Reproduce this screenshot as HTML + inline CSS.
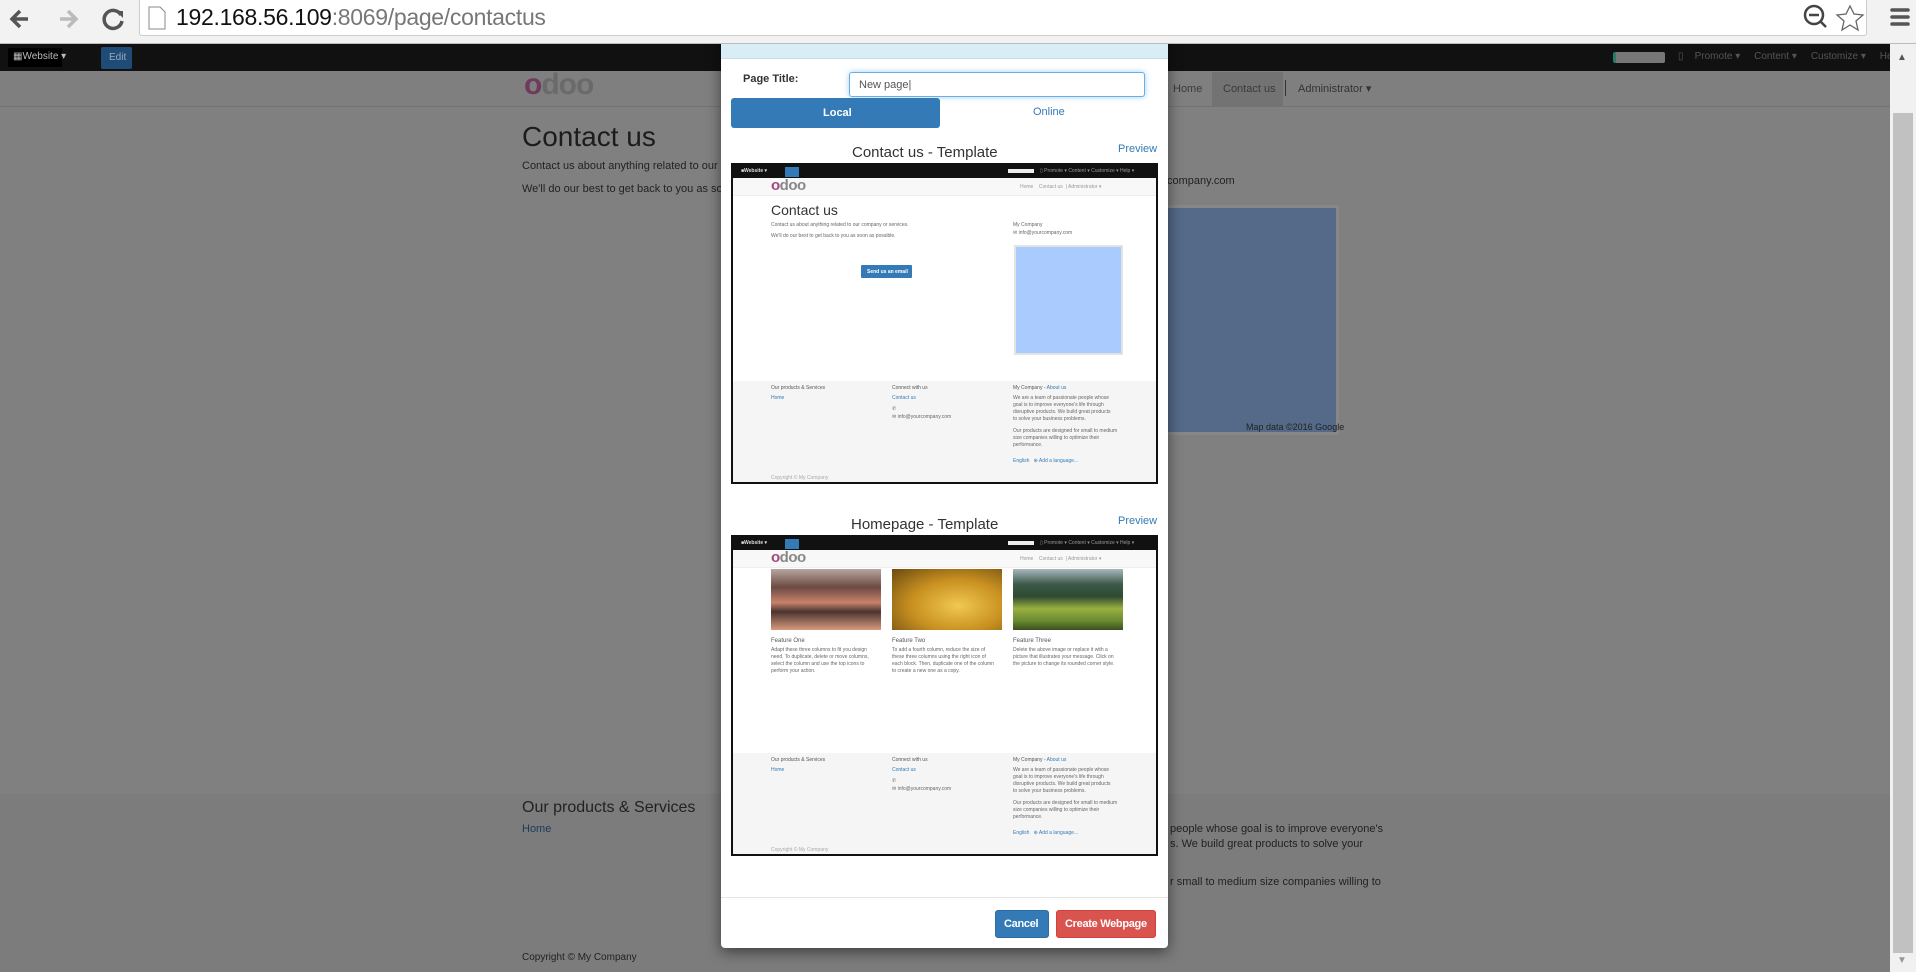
<!DOCTYPE html>
<html><head><meta charset="utf-8"><style>
*{margin:0;padding:0;box-sizing:border-box}
body{width:1916px;height:972px;overflow:hidden;position:relative;background:#808080;font-family:"Liberation Sans",Arial,sans-serif}
.a{position:absolute}
.t{position:absolute;white-space:nowrap}
.th{position:absolute;left:731px;width:427px;height:321px;border:2px solid #111;background:#fff;overflow:hidden}
.th .t{font-size:5px;color:#666}
</style></head><body>
<!-- black bar -->
<div class="a" style="left:0;top:44px;width:1916px;height:27px;background:#111"></div>
<div class="a" style="left:8px;top:48px;width:54px;height:19px;background:#000"></div>
<div class="t" style="left:13px;top:51px;font-size:10px;color:#bbb">&#9638;Website ▾</div>
<div class="a" style="left:101px;top:47px;width:31px;height:22px;background:#1f4c76;border-radius:2px"></div>
<div class="t" style="left:109px;top:52px;font-size:10px;color:#9ab">Edit</div>
<div class="a" style="left:1613px;top:52px;width:52px;height:11px;background:#777;border-radius:2px;border-left:3px solid #2a7a6a"></div>
<div class="t" style="left:1678px;top:51px;font-size:10px;color:#555">▯&nbsp;&nbsp;&nbsp; Promote ▾&nbsp;&nbsp;&nbsp;&nbsp; Content ▾&nbsp;&nbsp;&nbsp;&nbsp; Customize ▾&nbsp;&nbsp;&nbsp;&nbsp; He</div>
<!-- page header -->
<div class="a" style="left:0;top:71px;width:1890px;height:36px;background:#7f7f7f;border-bottom:1px solid #737373"></div>
<div class="t" style="left:524px;top:68px;font-size:30px;color:#6a6a6a;letter-spacing:-1px;font-weight:bold;-webkit-text-stroke:0"><span style="color:#6e3a5e">o</span>doo</div>
<div class="a" style="left:1212px;top:72px;width:71px;height:35px;background:#737373"></div>
<div class="t" style="left:1173px;top:83px;font-size:11px;color:#3a3a3a">Home</div>
<div class="t" style="left:1223px;top:83px;font-size:11px;color:#3a3a3a">Contact us</div>
<div class="a" style="left:1285px;top:80px;width:1px;height:16px;background:#333"></div>
<div class="t" style="left:1298px;top:82px;font-size:11px;color:#333">Administrator ▾</div>
<!-- page body -->
<div class="t" style="left:522px;top:121px;font-size:28px;color:#1c1c1c">Contact us</div>
<div class="t" style="left:522px;top:160px;font-size:11px;color:#222">Contact us about anything related to our co</div>
<div class="t" style="left:522px;top:183px;font-size:11px;color:#222">We'll do our best to get back to you as soo</div>
<div class="t" style="left:1167px;top:175px;font-size:11px;color:#222">company.com</div>
<div class="a" style="left:1167px;top:205px;width:172px;height:230px;background:#546a88;border:3px solid #878787;border-left:none"></div>
<div class="t" style="left:1246px;top:422px;font-size:9px;color:#222">Map data ©2016 Google</div>
<div class="a" style="left:0;top:794px;width:1890px;height:178px;background:#7c7c7c"></div>
<div class="t" style="left:522px;top:799px;font-size:16px;color:#222">Our products &amp; Services</div>
<div class="t" style="left:522px;top:823px;font-size:11px;color:#1d3a5c">Home</div>
<div class="t" style="left:1170px;top:823px;font-size:11px;color:#222">people whose goal is to improve everyone's</div>
<div class="t" style="left:1170px;top:838px;font-size:11px;color:#222">s. We build great products to solve your</div>
<div class="t" style="left:1170px;top:876px;font-size:11px;color:#222">r small to medium size companies willing to</div>
<div class="t" style="left:522px;top:952px;font-size:10px;color:#222">Copyright © My Company</div>
<!-- scrollbar -->
<div class="a" style="left:1890px;top:44px;width:26px;height:928px;background:#f1f1f1"></div>
<div class="a" style="left:1893px;top:113px;width:20px;height:840px;background:#c1c1c1"></div>
<div class="t" style="left:1897px;top:52px;font-size:10px;color:#555">▲</div>
<div class="t" style="left:1897px;top:955px;font-size:10px;color:#999">▼</div>
<!-- modal -->
<div class="a" style="left:721px;top:30px;width:447px;height:918px;background:#fff;border-radius:4px;box-shadow:0 4px 14px rgba(0,0,0,.5)"></div>
<div class="a" style="left:721px;top:30px;width:447px;height:29px;background:#d9edf7;border-bottom:1px solid #c8dde8"></div>
<div class="t" style="left:743px;top:73px;font-size:11px;font-weight:bold;color:#333">Page Title:</div>
<div class="a" style="left:849px;top:72px;width:296px;height:25px;border:1px solid #66afe9;border-radius:3px;box-shadow:0 0 6px rgba(102,175,233,.6)"></div>
<div class="t" style="left:859px;top:79px;font-size:11px;color:#555">New page|</div>
<div class="a" style="left:731px;top:98px;width:209px;height:30px;background:#337ab7;border-radius:3px"></div>
<div class="t" style="left:823px;top:107px;font-size:11px;font-weight:bold;color:#fff">Local</div>
<div class="t" style="left:1033px;top:106px;font-size:11px;color:#337ab7">Online</div>
<div class="t" style="left:852px;top:144px;font-size:15px;color:#333">Contact us - Template</div>
<div class="t" style="left:1118px;top:143px;font-size:11px;color:#337ab7">Preview</div>
<!-- thumb 1 -->
<div class="th" style="top:163px">
 <div class="a" style="left:0;top:0;width:427px;height:13px;background:#111"></div>
 <div class="t" style="left:8px;top:3px;color:#ddd;font-weight:bold">■Website ▾</div>
 <div class="a" style="left:52px;top:2px;width:14px;height:10px;background:#337ab7"></div>
 <div class="a" style="left:275px;top:4px;width:26px;height:4px;background:#eee"></div>
 <div class="t" style="left:307px;top:3px;color:#999">▯ Promote ▾ Content ▾ Customize ▾ Help ▾</div>
 <div class="a" style="left:0;top:13px;width:427px;height:18px;background:#f8f8f8;border-bottom:1px solid #eee"></div>
 <div class="t" style="left:38px;top:12px;font-size:15px;color:#888;letter-spacing:-.5px;font-weight:bold"><span style="color:#a3477f">o</span>doo</div>
 <div class="t" style="left:287px;top:19px;color:#999">Home&nbsp;&nbsp;&nbsp; Contact us &nbsp;| Administrator ▾</div>
 <div class="t" style="left:38px;top:37px;font-size:14px;color:#333">Contact us</div>
 <div class="t" style="left:38px;top:57px">Contact us about anything related to our company or services.</div>
 <div class="t" style="left:38px;top:68px">We'll do our best to get back to you as soon as possible.</div>
 <div class="a" style="left:128px;top:100px;width:51px;height:13px;background:#337ab7;border-radius:1px"></div>
 <div class="t" style="left:134px;top:104px;color:#fff;font-weight:bold">Send us an email</div>
 <div class="t" style="left:280px;top:57px">My Company</div>
 <div class="t" style="left:280px;top:65px">✉ info@yourcompany.com</div>
 <div class="a" style="left:281px;top:80px;width:109px;height:110px;background:#a9cbfd;border:2px solid #e4e4e4"></div>
 <div class="a" style="left:0;top:216px;width:427px;height:105px;background:#f5f5f5"></div>
 <div class="t" style="left:38px;top:220px;color:#555">Our products &amp; Services</div>
 <div class="t" style="left:38px;top:230px;color:#337ab7">Home</div>
 <div class="t" style="left:159px;top:220px;color:#555">Connect with us</div>
 <div class="t" style="left:159px;top:230px;color:#337ab7">Contact us</div>
 <div class="t" style="left:159px;top:241px">✆</div>
 <div class="t" style="left:159px;top:249px">✉ info@yourcompany.com</div>
 <div class="t" style="left:280px;top:220px;color:#555">My Company - <span style="color:#337ab7">About us</span></div>
 <div class="t" style="left:280px;top:230px;line-height:7px">We are a team of passionate people whose<br>goal is to improve everyone's life through<br>disruptive products. We build great products<br>to solve your business problems.</div>
 <div class="t" style="left:280px;top:263px;line-height:7px">Our products are designed for small to medium<br>size companies willing to optimize their<br>performance.</div>
 <div class="t" style="left:280px;top:293px;color:#337ab7">English &nbsp; ⊕ Add a language...</div>
 <div class="t" style="left:38px;top:310px;color:#aaa">Copyright © My Company</div>
</div>
<div class="t" style="left:851px;top:516px;font-size:15px;color:#333">Homepage - Template</div>
<div class="t" style="left:1118px;top:515px;font-size:11px;color:#337ab7">Preview</div>
<!-- thumb 2 -->
<div class="th" style="top:535px">
 <div class="a" style="left:0;top:0;width:427px;height:13px;background:#111"></div>
 <div class="t" style="left:8px;top:3px;color:#ddd;font-weight:bold">■Website ▾</div>
 <div class="a" style="left:52px;top:2px;width:14px;height:10px;background:#337ab7"></div>
 <div class="a" style="left:275px;top:4px;width:26px;height:4px;background:#eee"></div>
 <div class="t" style="left:307px;top:3px;color:#999">▯ Promote ▾ Content ▾ Customize ▾ Help ▾</div>
 <div class="a" style="left:0;top:13px;width:427px;height:18px;background:#f8f8f8;border-bottom:1px solid #eee"></div>
 <div class="t" style="left:38px;top:12px;font-size:15px;color:#888;letter-spacing:-.5px;font-weight:bold"><span style="color:#a3477f">o</span>doo</div>
 <div class="t" style="left:287px;top:19px;color:#999">Home&nbsp;&nbsp;&nbsp; Contact us &nbsp;| Administrator ▾</div>
 <div class="a" style="left:38px;top:32px;width:110px;height:61px;background:linear-gradient(180deg,#b8a6a0 0%,#6a4a42 30%,#c8826a 55%,#4a3430 70%,#d79a7c 100%)"></div>
 <div class="a" style="left:159px;top:32px;width:110px;height:61px;background:radial-gradient(ellipse at 60% 60%,#f0c850,#c89020 50%,#6a4a10 100%)"></div>
 <div class="a" style="left:280px;top:32px;width:110px;height:61px;background:linear-gradient(180deg,#a8b8c0 0%,#3c5a48 25%,#2e4a30 45%,#9ab040 65%,#6a8a30 85%,#3a5020 100%)"></div>
 <div class="t" style="left:38px;top:101px;font-size:6px;color:#555">Feature One</div>
 <div class="t" style="left:159px;top:101px;font-size:6px;color:#555">Feature Two</div>
 <div class="t" style="left:280px;top:101px;font-size:6px;color:#555">Feature Three</div>
 <div class="t" style="left:38px;top:110px;line-height:7px">Adapt these three columns to fit you design<br>need. To duplicate, delete or move columns,<br>select the column and use the top icons to<br>perform your action.</div>
 <div class="t" style="left:159px;top:110px;line-height:7px">To add a fourth column, reduce the size of<br>these three columns using the right icon of<br>each block. Then, duplicate one of the column<br>to create a new one as a copy.</div>
 <div class="t" style="left:280px;top:110px;line-height:7px">Delete the above image or replace it with a<br>picture that illustrates your message. Click on<br>the picture to change its rounded corner style.</div>
 <div class="a" style="left:0;top:216px;width:427px;height:105px;background:#f5f5f5"></div>
 <div class="t" style="left:38px;top:220px;color:#555">Our products &amp; Services</div>
 <div class="t" style="left:38px;top:230px;color:#337ab7">Home</div>
 <div class="t" style="left:159px;top:220px;color:#555">Connect with us</div>
 <div class="t" style="left:159px;top:230px;color:#337ab7">Contact us</div>
 <div class="t" style="left:159px;top:241px">✆</div>
 <div class="t" style="left:159px;top:249px">✉ info@yourcompany.com</div>
 <div class="t" style="left:280px;top:220px;color:#555">My Company - <span style="color:#337ab7">About us</span></div>
 <div class="t" style="left:280px;top:230px;line-height:7px">We are a team of passionate people whose<br>goal is to improve everyone's life through<br>disruptive products. We build great products<br>to solve your business problems.</div>
 <div class="t" style="left:280px;top:263px;line-height:7px">Our products are designed for small to medium<br>size companies willing to optimize their<br>performance.</div>
 <div class="t" style="left:280px;top:293px;color:#337ab7">English &nbsp; ⊕ Add a language...</div>
 <div class="t" style="left:38px;top:310px;color:#aaa">Copyright © My Company</div>
</div>
<!-- modal footer -->
<div class="a" style="left:721px;top:897px;width:447px;height:1px;background:#e5e5e5"></div>
<div class="a" style="left:995px;top:910px;width:54px;height:28px;background:#337ab7;border-radius:3px;border:1px solid #2e6da4"></div>
<div class="t" style="left:1004px;top:918px;font-size:11px;font-weight:bold;color:#fff;letter-spacing:-.3px">Cancel</div>
<div class="a" style="left:1056px;top:910px;width:100px;height:28px;background:#d9534f;border-radius:3px;border:1px solid #d43f3a"></div>
<div class="t" style="left:1065px;top:918px;font-size:11px;font-weight:bold;color:#fff;letter-spacing:-.3px">Create Webpage</div>
<!-- browser chrome (on top) -->
<div class="a" style="left:0;top:0;width:1916px;height:44px;background:#f2f2f2;border-bottom:1px solid #bbb"></div>
<div class="a" style="left:139px;top:0;width:1728px;height:36px;background:#fff;border:1px solid #ccc;border-top:none;border-radius:0 0 3px 3px"></div>
<svg class="a" style="left:8px;top:6px" width="120" height="26" viewBox="0 0 120 26"><path d="M20 13H5M12 5l-8 8 8 8" stroke="#555" stroke-width="3.5" fill="none"/><path d="M52 13h15M60 5l8 8-8 8" stroke="#bbb" stroke-width="3.5" fill="none"/><path d="M113 9a9 9 0 1 0 1 6" stroke="#555" stroke-width="3.5" fill="none"/><path d="M108 5h7v7z" fill="#555"/></svg>
<svg class="a" style="left:148px;top:6px" width="18" height="24"><path d="M1 1h11l5 5v17H1z" fill="#fff" stroke="#888"/></svg>
<div class="t" style="left:176px;top:4px;font-size:23px;color:#111;letter-spacing:-.3px">192.168.56.109<span style="color:#777">:8069/page/contactus</span></div>
<svg class="a" style="left:1802px;top:3px" width="110" height="30"><circle cx="12" cy="12" r="9" stroke="#444" stroke-width="2.5" fill="none"/><path d="M7 12h10M18 18l6 6" stroke="#444" stroke-width="2.5"/><path d="M48 3l4 8 9 1-7 6 2 9-8-5-8 5 2-9-7-6 9-1z" stroke="#666" fill="none" stroke-width="1.3"/><path d="M90 7h16M90 14h16M90 21h16" stroke="#555" stroke-width="3.5" stroke-linecap="round"/></svg>
</body></html>
